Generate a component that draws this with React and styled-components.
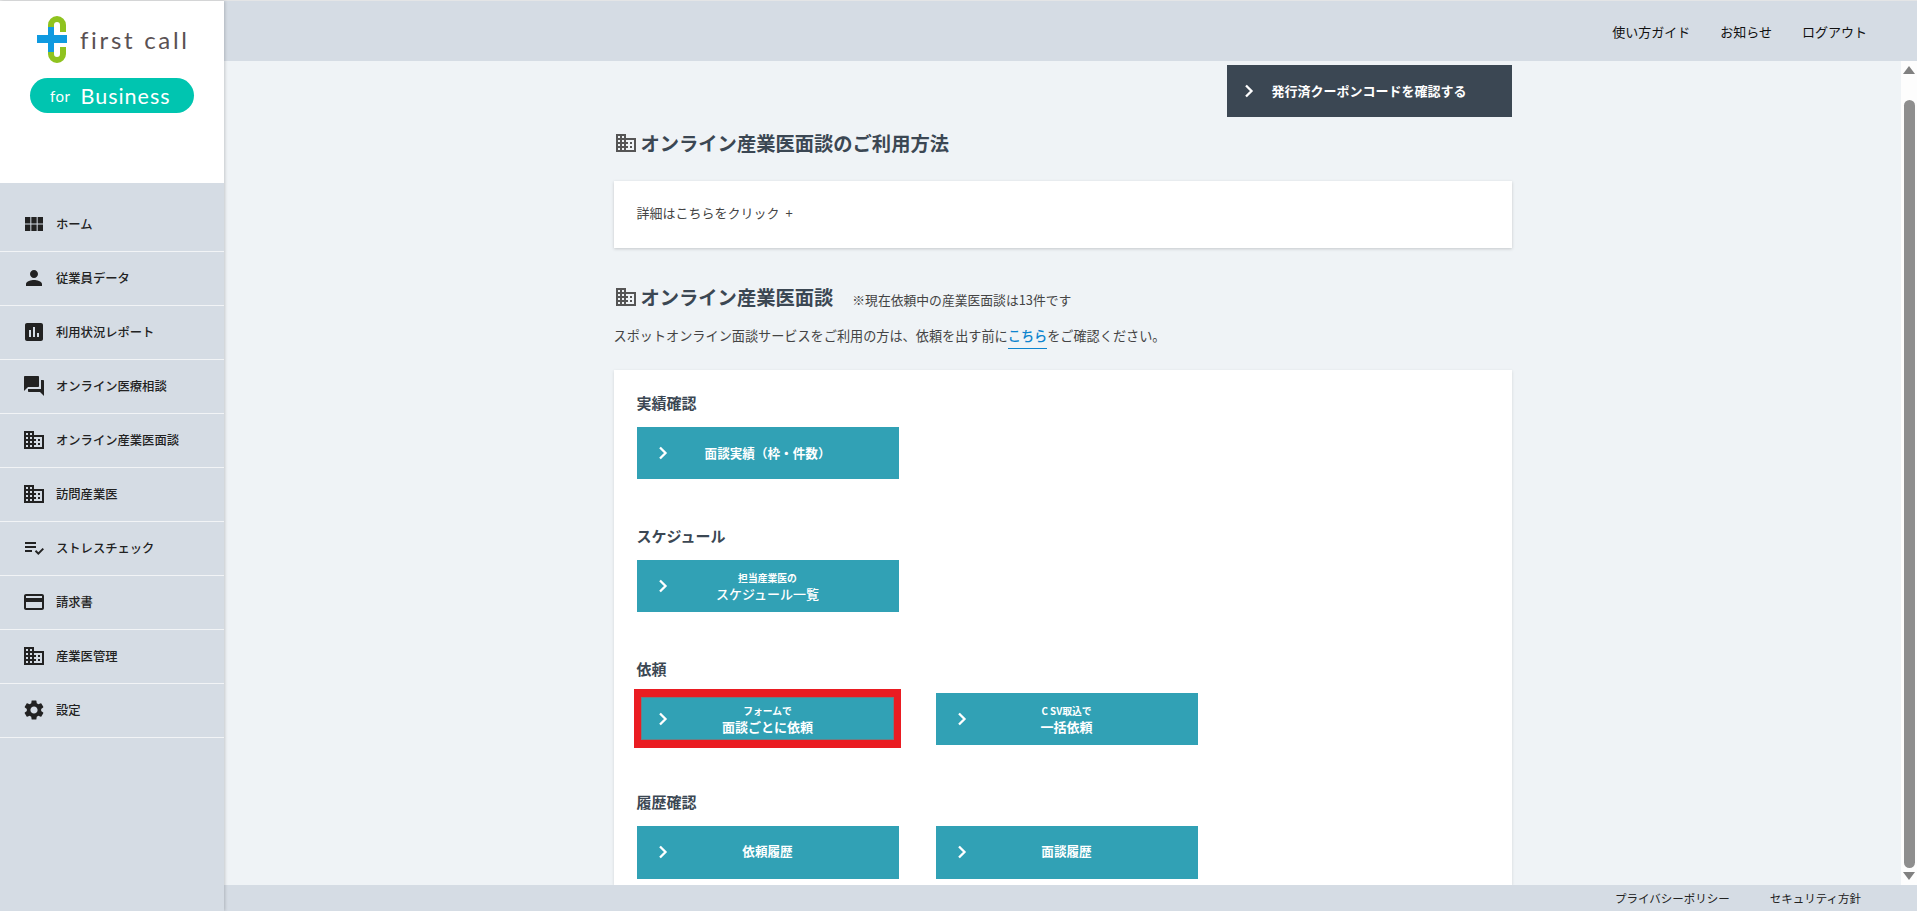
import React, { useEffect, useRef } from 'react';
import styled, { createGlobalStyle } from 'styled-components';
import {
  MdViewModule,
  MdPerson,
  MdAssessment,
  MdQuestionAnswer,
  MdBusiness,
  MdPlaylistAddCheck,
  MdCreditCard,
  MdSettings,
} from 'react-icons/md';

const GlobalStyle = createGlobalStyle`
  html, body {
    margin: 0;
    height: 100%;
    overflow: hidden;
  }
  body {
    font-family: "Noto Sans CJK JP", "Noto Sans", sans-serif;
    color: #333;
  }
  * {
    box-sizing: border-box;
  }
`;

const Shell = styled.div`
  display: flex;
  height: 100vh;
  border-top: 1px solid #e4e5e6;
  background: #d5dce4;
`;

const Sidebar = styled.aside`
  width: 224px;
  flex-shrink: 0;
  display: flex;
  flex-direction: column;
  background: #d5dce4;
  box-shadow: 1px 0 3px rgba(0, 0, 0, 0.18);
  z-index: 2;
`;

const LogoArea = styled.div`
  height: 182px;
  background: #fff;
  padding: 15px 0 0 30px;
`;

const LogoRow = styled.div`
  display: flex;
  align-items: center;
  gap: 13px;
  margin-left: 7px;
`;

const LogoName = styled.span`
  font-family: Lato, "Noto Sans", sans-serif;
  font-weight: 400;
  font-size: 24px;
  letter-spacing: 2.7px;
  color: #5a5153;
  white-space: nowrap;
`;

const Pill = styled.div`
  width: 164px;
  height: 35px;
  margin-top: 15px;
  padding-left: 20px;
  display: flex;
  align-items: center;
  gap: 10px;
  border-radius: 18px;
  background: #00c5b0;
  color: #fff;
  font-family: Lato, "Noto Sans", sans-serif;
`;

const PillFor = styled.span`
  font-size: 15px;
  letter-spacing: 0.5px;
`;

const PillBusiness = styled.span`
  font-size: 21.5px;
  letter-spacing: 1px;
`;

const Nav = styled.nav`
  padding-top: 15px;
`;

const NavItem = styled.a`
  height: 54px;
  padding: 0 0 2px 22px;
  display: flex;
  align-items: center;
  gap: 10px;
  border-bottom: 1px solid #f2f4f6;
  color: #222;
  font-size: 12.3px;
  font-weight: 500;
  white-space: nowrap;

  svg {
    width: 24px;
    height: 24px;
    flex-shrink: 0;
  }
`;

const Right = styled.div`
  flex: 1;
  min-width: 0;
  display: flex;
  flex-direction: column;
`;

const Header = styled.header`
  height: 60px;
  flex-shrink: 0;
  padding-right: 50px;
  display: flex;
  justify-content: flex-end;
  align-items: center;
  gap: 30px;
  background: #d5dce4;
`;

const HeaderLink = styled.a`
  color: #111;
  font-size: 13px;
`;

const Body = styled.div`
  flex: 1;
  min-height: 0;
  display: flex;
`;

const Main = styled.main`
  flex: 1;
  min-width: 0;
  overflow: hidden;
  background: #eff3f6;
`;

const ScrollRail = styled.div`
  width: 16px;
  flex-shrink: 0;
  display: flex;
  flex-direction: column;
  align-items: center;
  background: #fdfdfd;
`;

const RailArrow = styled.svg`
  width: 16px;
  height: 17px;
  flex-shrink: 0;
  fill: #808080;
`;

const RailThumb = styled.div`
  flex: 1;
  width: 11px;
  margin-top: 22px;
  border-radius: 6px;
  background: #8e8e8e;
`;

const Content = styled.div`
  width: 898px;
  margin: 0 auto;
  padding-top: 28px;
`;

const CouponRow = styled.div`
  display: flex;
  justify-content: flex-end;
`;

const ActionButton = styled.a`
  width: 262px;
  height: ${({ $tall }) => ($tall ? '53px' : '52px')};
  padding-bottom: ${({ $tall }) => ($tall ? '2px' : '0')};
  display: grid;
  grid-template-columns: 1fr auto 1fr;
  align-items: center;
  background: #31a1b5;
  color: #fff;
  font-weight: 700;
  font-size: 12.6px;
  text-align: center;
  cursor: pointer;

  svg {
    margin-left: 21px;
  }
`;

const CouponButton = styled(ActionButton)`
  width: 285px;
  background: #3b4753;
  font-size: 13px;

  svg {
    margin-left: 17px;
  }
`;

const SingleLabel = styled.span`
  margin-bottom: 2px;
`;

const SmallLine = styled.span`
  display: block;
  font-size: 9.8px;
  line-height: 14px;
`;

const LargeLine = styled.span`
  display: block;
  font-size: 13px;
  line-height: 17px;
  font-weight: ${({ $light }) => ($light ? 500 : 700)};
`;

const Heading = styled.h2`
  margin: ${({ $top }) => $top} 0 0;
  height: 24px;
  display: flex;
  align-items: center;
  gap: 3px;
  color: #3b4753;
  font-size: 19.3px;
  font-weight: 700;
  white-space: nowrap;

  svg {
    width: 24px;
    height: 24px;
    color: #555;
    flex-shrink: 0;
  }
`;

const HeadingNote = styled.span`
  margin: 5px 0 0 16px;
  color: #444;
  font-size: 12.8px;
  font-weight: 400;
`;

const DetailCard = styled.div`
  height: 67px;
  margin-top: 26px;
  padding: 0 0 4px 23px;
  display: flex;
  align-items: center;
  background: #fff;
  color: #444;
  font-size: 13px;
  word-spacing: 3px;
  box-shadow: 0 1px 3px rgba(0, 0, 0, 0.18);
`;

const Lead = styled.p`
  margin: 15px 0 0;
  color: #444;
  font-size: 13.15px;
  line-height: 24px;
`;

const LeadLink = styled.a`
  padding-bottom: 3px;
  border-bottom: 1px solid #0d84ce;
  color: #0d84ce;
  font-weight: 500;
`;

const PanelCard = styled.section`
  margin-top: 22px;
  padding: 21px 23px 6px;
  display: flex;
  flex-direction: column;
  gap: 45px;
  background: #fff;
  box-shadow: 0 1px 3px rgba(0, 0, 0, 0.12);
`;

const Group = styled.div`
  display: flex;
  flex-direction: column;
  gap: 12px;
`;

const GroupTitle = styled.h3`
  margin: 0;
  color: #3b4753;
  font-size: 15px;
  line-height: 24px;
  font-weight: 700;
`;

const ButtonRow = styled.div`
  display: flex;
  gap: 37px;
`;

const Highlighted = styled.div`
  position: relative;
`;

const HighlightFrame = styled.span`
  position: absolute;
  inset: -4px -2px -3px -3px;
  border-style: solid;
  border-width: 8px 7px;
  border-color: #ea1c22;
  box-shadow: inset 0 0 0 1px #6c7f86;
  pointer-events: none;
`;

const Footer = styled.footer`
  height: 26px;
  flex-shrink: 0;
  padding-right: 56px;
  display: flex;
  justify-content: flex-end;
  align-items: center;
  gap: 40px;
  background: #d5dce4;
`;

const FooterLink = styled.a`
  color: #222;
  font-size: 11.5px;
`;

const LogoMark = () => (
  <svg width="30" height="47" viewBox="0 0 30 47" aria-hidden="true">
    <path
      d="M26 16V9A6 6 0 0 0 20 3A6 6 0 0 0 14 9V38A6 6 0 0 0 20 44A6 6 0 0 0 26 38V31"
      fill="none"
      stroke="#8fc31f"
      strokeWidth="6"
    />
    <rect x="11" y="11" width="6" height="25" fill="#0f9ae0" />
    <rect x="0" y="19" width="30" height="8" fill="#0f9ae0" />
  </svg>
);

const Chevron = () => (
  <svg width="10" height="14" viewBox="0 0 10 14" aria-hidden="true">
    <polyline points="2,1.5 7.5,7 2,12.5" fill="none" stroke="#fff" strokeWidth="2.3" />
  </svg>
);

const navItems = [
  { label: 'ホーム', icon: MdViewModule },
  { label: '従業員データ', icon: MdPerson },
  { label: '利用状況レポート', icon: MdAssessment },
  { label: 'オンライン医療相談', icon: MdQuestionAnswer },
  { label: 'オンライン産業医面談', icon: MdBusiness },
  { label: '訪問産業医', icon: MdBusiness },
  { label: 'ストレスチェック', icon: MdPlaylistAddCheck },
  { label: '請求書', icon: MdCreditCard },
  { label: '産業医管理', icon: MdBusiness },
  { label: '設定', icon: MdSettings },
];

const TwoLineLabel = ({ small, large, light }) => (
  <span>
    <SmallLine>{small}</SmallLine>
    <LargeLine $light={light}>{large}</LargeLine>
  </span>
);

const App = () => {
  const mainRef = useRef(null);

  // start scrolled to the bottom, as in the capture
  useEffect(() => {
    if (mainRef.current) mainRef.current.scrollTop = mainRef.current.scrollHeight;
  }, []);

  return (
    <>
      <GlobalStyle />
      <Shell>
        <Sidebar>
          <LogoArea>
            <LogoRow>
              <LogoMark />
              <LogoName>first call</LogoName>
            </LogoRow>
            <Pill>
              <PillFor>for</PillFor>
              <PillBusiness>Business</PillBusiness>
            </Pill>
          </LogoArea>
          <Nav>
            {navItems.map(({ label, icon: Icon }) => (
              <NavItem key={label}>
                <Icon />
                {label}
              </NavItem>
            ))}
          </Nav>
        </Sidebar>

        <Right>
          <Header>
            <HeaderLink>使い方ガイド</HeaderLink>
            <HeaderLink>お知らせ</HeaderLink>
            <HeaderLink>ログアウト</HeaderLink>
          </Header>

          <Body>
            <Main ref={mainRef}>
              <Content>
                <CouponRow>
                  <CouponButton>
                    <Chevron />
                    <SingleLabel>発行済クーポンコードを確認する</SingleLabel>
                  </CouponButton>
                </CouponRow>

                <Heading $top="14px">
                  <MdBusiness />
                  オンライン産業医面談のご利用方法
                </Heading>
                <DetailCard>詳細はこちらをクリック +</DetailCard>

                <Heading $top="37px">
                  <MdBusiness />
                  オンライン産業医面談
                  <HeadingNote>※現在依頼中の産業医面談は13件です</HeadingNote>
                </Heading>
                <Lead>
                  スポットオンライン面談サービスをご利用の方は、依頼を出す前に
                  <LeadLink>こちら</LeadLink>
                  をご確認ください。
                </Lead>

                <PanelCard>
                  <Group>
                    <GroupTitle>実績確認</GroupTitle>
                    <ButtonRow>
                      <ActionButton>
                        <Chevron />
                        <SingleLabel>面談実績（枠・件数）</SingleLabel>
                      </ActionButton>
                    </ButtonRow>
                  </Group>

                  <Group>
                    <GroupTitle>スケジュール</GroupTitle>
                    <ButtonRow>
                      <ActionButton>
                        <Chevron />
                        <TwoLineLabel small="担当産業医の" large="スケジュール一覧" light />
                      </ActionButton>
                    </ButtonRow>
                  </Group>

                  <Group>
                    <GroupTitle>依頼</GroupTitle>
                    <ButtonRow>
                      <Highlighted>
                        <ActionButton>
                          <Chevron />
                          <TwoLineLabel small="フォームで" large="面談ごとに依頼" />
                        </ActionButton>
                        <HighlightFrame />
                      </Highlighted>
                      <ActionButton>
                        <Chevron />
                        <TwoLineLabel small="C SV取込で" large="一括依頼" />
                      </ActionButton>
                    </ButtonRow>
                  </Group>

                  <Group>
                    <GroupTitle>履歴確認</GroupTitle>
                    <ButtonRow>
                      <ActionButton $tall>
                        <Chevron />
                        <SingleLabel>依頼履歴</SingleLabel>
                      </ActionButton>
                      <ActionButton $tall>
                        <Chevron />
                        <SingleLabel>面談履歴</SingleLabel>
                      </ActionButton>
                    </ButtonRow>
                  </Group>
                </PanelCard>
              </Content>
            </Main>
            <ScrollRail>
              <RailArrow viewBox="0 0 16 17">
                <path d="M2 13 8 5l6 8z" />
              </RailArrow>
              <RailThumb />
              <RailArrow viewBox="0 0 16 17">
                <path d="M2 4h12l-6 8z" />
              </RailArrow>
            </ScrollRail>
          </Body>

          <Footer>
            <FooterLink>プライバシーポリシー</FooterLink>
            <FooterLink>セキュリティ方針</FooterLink>
          </Footer>
        </Right>
      </Shell>
    </>
  );
};

export default App;
